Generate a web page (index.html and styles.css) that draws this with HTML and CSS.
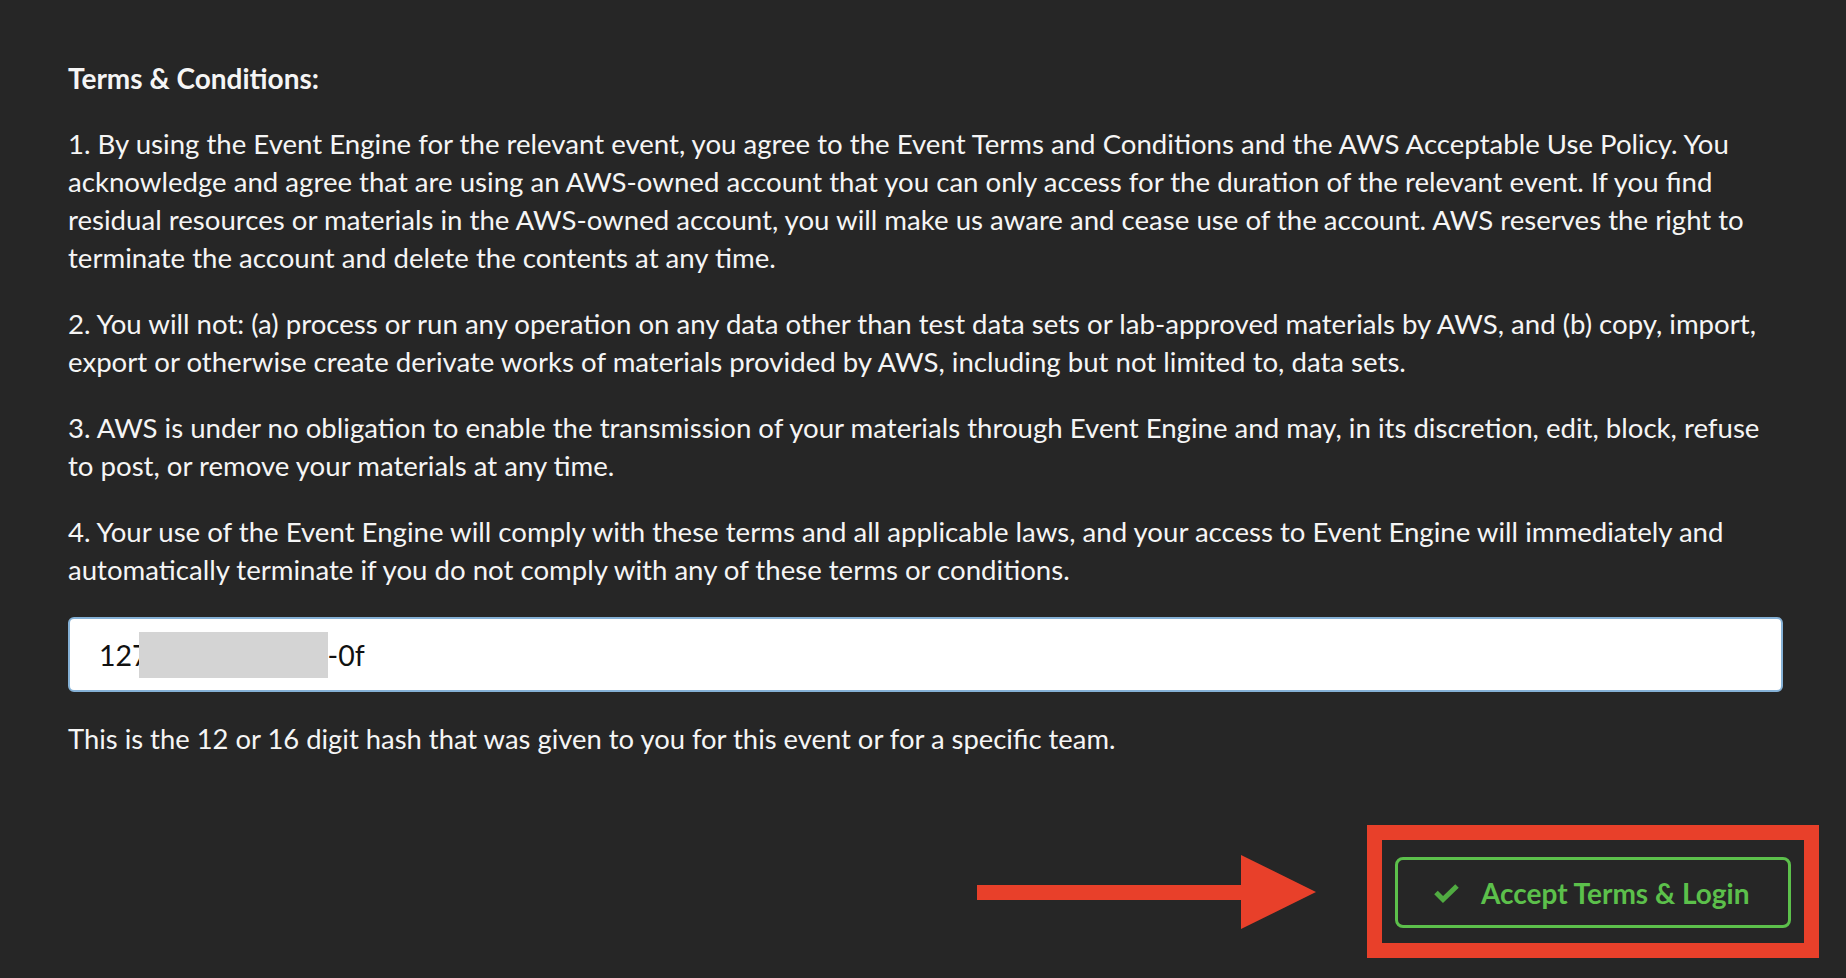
FILE: index.html
```html
<!DOCTYPE html>
<html lang="en">
<head>
<meta charset="utf-8">
<title>Terms &amp; Conditions</title>
<link rel="stylesheet" href="styles.css">
</head>
<body>
<div class="page">
  <div class="content">
    <p class="title">Terms &amp; Conditions:</p>
    <p>1. By using the Event Engine for the relevant event, you agree to the Event Terms and Conditions and the AWS Acceptable Use Policy. You acknowledge and agree that are using an AWS-owned account that you can only access for the duration of the relevant event. If you find residual resources or materials in the AWS-owned account, you will make us aware and cease use of the account. AWS reserves the right to terminate the account and delete the contents at any time.</p>
    <p>2. You will not: (a) process or run any operation on any data other than test data sets or lab-approved materials by AWS, and (b) copy, import, export or otherwise create derivate works of materials provided by AWS, including but not limited to, data sets.</p>
    <p>3. AWS is under no obligation to enable the transmission of your materials through Event Engine and may, in its discretion, edit, block, refuse to post, or remove your materials at any time.</p>
    <p>4. Your use of the Event Engine will comply with these terms and all applicable laws, and your access to Event Engine will immediately and automatically terminate if you do not comply with any of these terms or conditions.</p>
    <div class="input">
      <span class="val">127</span><span class="redact"></span><span class="val">-0f</span>
    </div>
    <p class="help">This is the 12 or 16 digit hash that was given to you for this event or for a specific team.</p>
  </div>
  <div class="actions">
    <div class="btn-wrap">
      <svg class="arrow" width="339" height="74" viewBox="0 0 339 74"><polygon points="0,30 264,30 264,0 339,37 264,74 264,45 0,45" fill="#e8402a"/></svg>
      <div class="highlight"></div>
      <button class="btn">
        <svg class="check" width="27" height="21" viewBox="0 0 27 21"><polyline points="3,10.5 10,17.5 24,4" fill="none" stroke="#50ab41" stroke-width="5" stroke-linecap="butt" stroke-linejoin="miter"/></svg>
        <span>Accept Terms &amp; Login</span>
      </button>
    </div>
  </div>
</div>
</body>
</html>
```
FILE: styles.css
```css
html, body {
  margin: 0;
  padding: 0;
  background: #262626;
}
body {
  font-family: Lato, "Open Sans", sans-serif;
  color: #f5f5f5;
  width: 1846px;
  height: 978px;
  overflow: hidden;
}
.page {
  padding: 59px 0 0 68px;
}
.content {
  width: 1715px;
}
p {
  margin: 0 0 28px 0;
  font-size: 27.6px;
  line-height: 38px;
}
.title {
  font-weight: 700;
  font-size: 28px;
}
.help {
  font-size: 27.4px;
}
.input {
  box-sizing: border-box;
  height: 75px;
  margin-bottom: 28px;
  background: #fff;
  border: 2px solid #85b1d6;
  border-radius: 6px;
  display: flex;
  align-items: center;
  padding-left: 29px;
  color: #111;
  font-size: 28.5px;
}
.redact {
  display: inline-block;
  width: 189px;
  height: 46px;
  margin-left: -10px;
  background: #d4d4d4;
}
.actions {
  display: flex;
  justify-content: flex-end;
  padding-right: 55px;
  margin-top: 99px;
}
.btn-wrap {
  position: relative;
}
.highlight {
  position: absolute;
  left: -28px;
  right: -28px;
  top: -32px;
  bottom: -30px;
  border: 15px solid #e8402a;
  pointer-events: none;
}
.arrow {
  position: absolute;
  left: -418px;
  top: -2px;
}
.btn {
  box-sizing: border-box;
  width: 396px;
  height: 71px;
  background: transparent;
  border: 3px solid #5cc04b;
  border-radius: 8px;
  color: #5cc04b;
  font-family: Lato, sans-serif;
  font-weight: 700;
  font-size: 28px;
  display: flex;
  align-items: center;
  padding: 0 0 0 35px;
  gap: 21px;
  cursor: pointer;
}
.check {
  display: block;
  flex: none;
}
```
